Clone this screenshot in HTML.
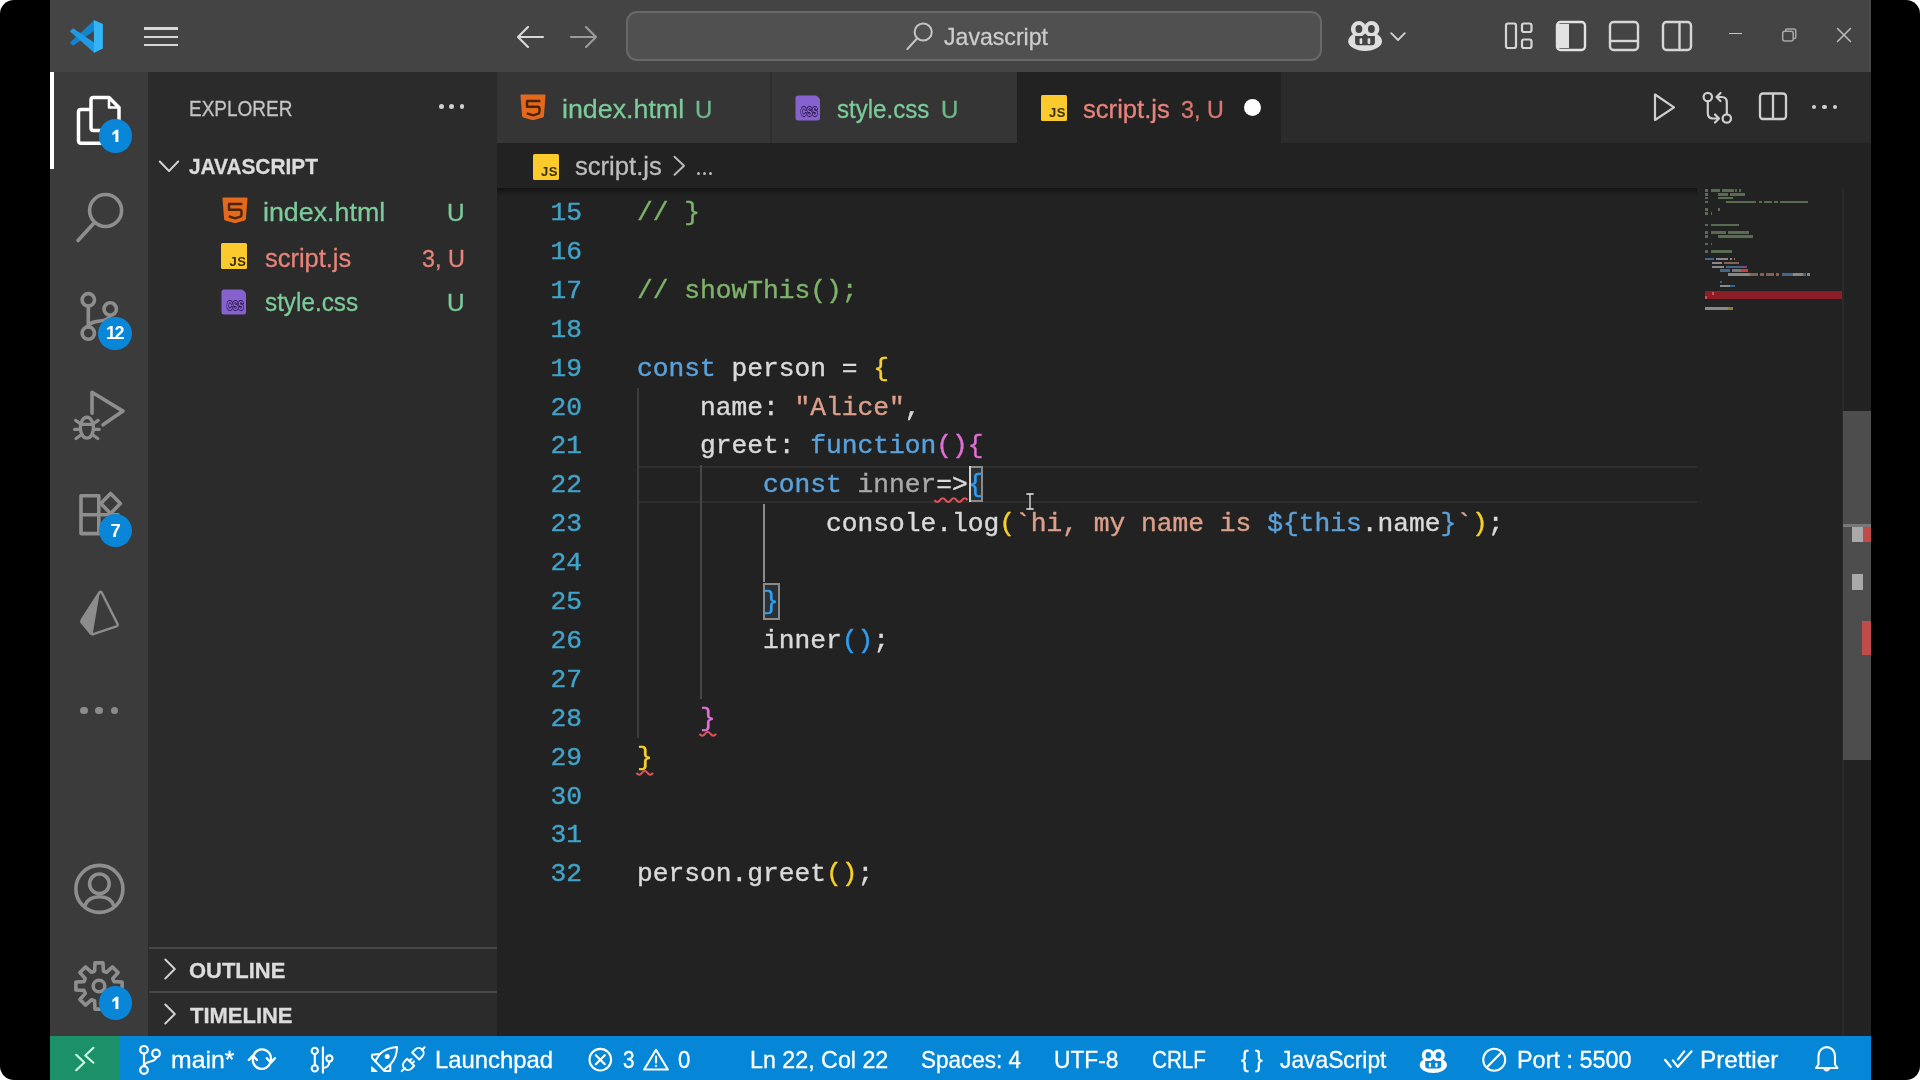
<!DOCTYPE html>
<html lang="en">
<head>
<meta charset="utf-8">
<title>script.js - Javascript - Visual Studio Code</title>
<style>
html,body{margin:0;padding:0;width:1920px;height:1080px;overflow:hidden;background:#ffffff;}
body{font-family:"Liberation Sans",sans-serif;}
#frame{position:absolute;left:0;top:0;width:1920px;height:1080px;background:#000;border-radius:14px;overflow:hidden;will-change:transform;}
.a{position:absolute;}
.t{position:absolute;white-space:pre;-webkit-text-stroke:0.3px;transform-origin:0 50%;font-family:"Liberation Sans",sans-serif;}
svg{position:absolute;overflow:visible;}
.ln{position:absolute;left:497px;width:85px;text-align:right;font-family:"Liberation Mono",monospace;font-size:26.26px;line-height:38.9px;height:38.9px;color:#41a3c9;white-space:pre;-webkit-text-stroke:0.4px;}
.cl{position:absolute;left:637px;font-family:"Liberation Mono",monospace;font-size:26.26px;line-height:38.9px;height:38.9px;color:#dadada;white-space:pre;-webkit-text-stroke:0.4px;}
.k{color:#5aa2dc}.s{color:#dca08a}.c{color:#7db36a}.y{color:#f7d02c}.p{color:#e070d6}.b{color:#2d9ff5}.w{color:#dadada}
.badge{position:absolute;width:33.400px;height:33.400px;border-radius:17px;background:#0a86d8;color:#fff;font-weight:700;font-size:18.500px;line-height:33.400px;text-align:center;font-family:"Liberation Sans",sans-serif;}
</style>
</head>
<body>
<div id="frame">
<!-- window background regions -->
<div class="a" style="left:50px;top:0;width:1821px;height:72px;background:#444444"></div>
<div class="a" style="left:1869px;top:0;width:2px;height:72px;background:#4a4a4a"></div>
<div class="a" style="left:50px;top:72px;width:98.400px;height:964px;background:#3b3b3b"></div>
<div class="a" style="left:148.400px;top:72px;width:348.600px;height:964px;background:#2b2b2b"></div>
<div class="a" style="left:497px;top:72px;width:1374px;height:964px;background:#222222"></div>
<!-- title bar -->
<svg style="left:68px;top:19px" width="38" height="36" viewBox="0 0 38 36">
 <path d="M1.800 23.800 L5 26.800 L26.500 11.600 V1 Z" fill="#1384cd"/>
 <path d="M1.800 12.200 L5 9.300 L26.500 23.800 V34 Z" fill="#1e9ae6"/>
 <path d="M25.900 0.900 L34.900 5 V29.600 L25.900 34 Z" fill="#34b4f5"/>
</svg>
<div class="a" style="left:143.700px;top:27.400px;width:34.400px;height:2.300px;background:#d6d6d6"></div>
<div class="a" style="left:143.700px;top:35.500px;width:34.400px;height:2.300px;background:#d6d6d6"></div>
<div class="a" style="left:143.700px;top:43.500px;width:34.400px;height:2.300px;background:#d6d6d6"></div>
<svg style="left:515px;top:24px" width="30" height="26" viewBox="0 0 30 26" fill="none" stroke="#d8d8d8" stroke-width="2.2" stroke-linecap="round" stroke-linejoin="round"><path d="M28 13 H3 M13 3 L3 13 L13 23"/></svg>
<svg style="left:569px;top:24px" width="30" height="26" viewBox="0 0 30 26" fill="none" stroke="#9a9a9a" stroke-width="2.2" stroke-linecap="round" stroke-linejoin="round"><path d="M2 13 H27 M17 3 L27 13 L17 23"/></svg>
<div class="a" style="left:625.500px;top:10.800px;width:692px;height:46.500px;border:2px solid #686868;border-radius:11px;background:#505050"></div>
<svg style="left:904px;top:20px" width="34" height="34" viewBox="0 0 34 34" fill="none" stroke="#c4c4c4" stroke-width="2" stroke-linecap="round"><circle cx="19.2" cy="12" r="8.6"/><path d="M13.2 18.3 L3.4 29"/></svg>
<!-- copilot -->
<svg style="left:1347px;top:20px" width="36" height="32" viewBox="0 0 36 32"><circle cx="11.700" cy="8.900" r="7.800" fill="#dedede"/><circle cx="24.600" cy="8.900" r="7.800" fill="#dedede"/><ellipse cx="18.100" cy="21.200" rx="16.900" ry="9.700" fill="#dedede"/><ellipse cx="11.900" cy="9.100" rx="3.400" ry="4" fill="#444444"/><ellipse cx="24.400" cy="9.100" rx="3.400" ry="4" fill="#444444"/><path d="M8.100 16 H15.200 L18.100 13.600 L21 16 H27.900 V22.300 Q27.900 25.300 24.900 25.300 H11.100 Q8.100 25.300 8.100 22.300 Z" fill="#444444"/><rect x="12.600" y="18.200" width="2.700" height="5.700" rx="1.200" fill="#dedede"/><rect x="20.600" y="18.200" width="2.700" height="5.700" rx="1.200" fill="#dedede"/></svg>
<svg style="left:1388.600px;top:31px" width="18" height="12" viewBox="0 0 18 12" fill="none" stroke="#d0d0d0" stroke-width="1.900" stroke-linecap="round" stroke-linejoin="round"><path d="M2.200 2.200 L9 9 L15.800 2.200"/></svg>
<!-- layout icons -->
<svg style="left:1504px;top:21px" width="30" height="30" viewBox="0 0 30 30" fill="none" stroke="#d6d6d6" stroke-width="2.200"><rect x="2" y="2.500" width="10" height="24.500" rx="2"/><rect x="18" y="2.500" width="9.500" height="8.500" rx="2"/><rect x="18" y="18.500" width="9.500" height="8.500" rx="2"/></svg>
<svg style="left:1555px;top:20px" width="32" height="32" viewBox="0 0 32 32" fill="none" stroke="#e2e2e2" stroke-width="2.400"><rect x="2" y="2" width="28" height="28" rx="3.500"/><path d="M2 4 H14 V28 H2 Z" fill="#e2e2e2" stroke="none"/></svg>
<svg style="left:1608px;top:20px" width="32" height="32" viewBox="0 0 32 32" fill="none" stroke="#d6d6d6" stroke-width="2.400"><rect x="2" y="2" width="28" height="28" rx="3.500"/><path d="M2 21 H30"/></svg>
<svg style="left:1661px;top:20px" width="32" height="32" viewBox="0 0 32 32" fill="none" stroke="#d6d6d6" stroke-width="2.400"><rect x="2" y="2" width="28" height="28" rx="3.500"/><path d="M18.500 2 V30"/></svg>
<!-- window controls -->
<div class="a" style="left:1729px;top:32.700px;width:13px;height:1.500px;background:#c6c6c6"></div>
<svg style="left:1781px;top:27px" width="18" height="16" viewBox="0 0 18 16" fill="none" stroke="#a8a8a8" stroke-width="1.500"><rect x="1.700" y="4.300" width="10.500" height="9.700" rx="2"/><path d="M4.500 4 V3.500 Q4.500 2 6 2 H13 Q14.800 2 14.800 3.800 V10 Q14.800 11.500 13.300 11.500 H12.500"/></svg>
<svg style="left:1836px;top:27px" width="16" height="16" viewBox="0 0 16 16" fill="none" stroke="#bdbdbd" stroke-width="1.500" stroke-linecap="round"><path d="M1.500 1.500 L14.500 14.500 M14.500 1.500 L1.500 14.500"/></svg>
<!-- activity bar -->
<div class="a" style="left:50px;top:72px;width:4px;height:97px;background:#ffffff"></div>
<!-- files -->
<svg style="left:70px;top:90px" width="60" height="60" viewBox="0 0 60 60" fill="none" stroke="#ffffff" stroke-width="3.500" stroke-linejoin="round" stroke-linecap="round">
 <path d="M20.500 19.500 H11 Q8.500 19.500 8.500 22 V50.500 Q8.500 53.200 11 53.200 H32"/>
 <path d="M23.500 7.500 H39 L49 17.500 V38 Q49 40.500 46.500 40.500 H23.500 Q21 40.500 21 38 V10 Q21 7.500 23.500 7.500 Z"/>
 <path d="M39 8 V17.500 H48.500" stroke-width="2.600"/>
</svg>
<div class="badge" style="left:99px;top:119.300px"><svg style="left:0;top:0" width="33.400" height="33.400" viewBox="-16.700 -16.700 33.400 33.400"><path d="M-3.300 -2.900 L0.300 -6 H2.700 V6.200 H-0.300 V-2.500 L-3.300 -0.400 Z" fill="#ffffff"/></svg></div>
<!-- search -->
<svg style="left:70px;top:186px" width="60" height="60" viewBox="0 0 60 60" fill="none" stroke="#8e8e8e" stroke-width="3.600" stroke-linecap="round">
 <circle cx="35.600" cy="24.500" r="16"/><path d="M24.500 36.500 L8 54.500"/>
</svg>
<!-- source control -->
<svg style="left:70px;top:286px" width="60" height="60" viewBox="0 0 60 60" fill="none" stroke="#8e8e8e" stroke-width="3.600" stroke-linecap="round">
 <circle cx="18.300" cy="13.800" r="6.200"/><circle cx="40.200" cy="23" r="6.200"/><circle cx="18.300" cy="47.100" r="6.200"/>
 <path d="M18.300 20 V41"/><path d="M40.200 29.200 C39.500 33.500 34 34.500 29.700 35 C24 35.800 19.500 36.500 18.300 40.500"/>
</svg>
<div class="badge" style="left:98.400px;top:316.500px;font-size:18px;letter-spacing:-1.300px;text-indent:-1px">12</div>
<!-- debug -->
<svg style="left:70px;top:384px" width="60" height="60" viewBox="0 0 60 60" fill="none" stroke="#8e8e8e" stroke-width="3.600" stroke-linecap="round" stroke-linejoin="round">
 <path d="M22 29.200 V8.300 L53 27.100 L33 40.800"/>
 <ellipse cx="16.900" cy="43.700" rx="6.600" ry="10.400" stroke-width="3.400"/>
 <path d="M5.600 36.400 L10 39.400 M28.200 36.400 L23.800 39.400 M4.600 45.400 H10 M29.200 45.400 H23.800 M6 54.500 L10.600 51.200 M27.800 54.500 L23.200 51.200 M10.800 40.300 H23" stroke-width="3.200"/>
</svg>
<!-- extensions -->
<svg style="left:70px;top:486px" width="60" height="60" viewBox="0 0 60 60" fill="none" stroke="#8e8e8e" stroke-width="3.600" stroke-linejoin="round">
 <path d="M11 9.800 H28.800 V47.600 H11 Z M11 28.700 H28.800 M28.800 28.700 H48 V47.600 H28.800"/>
 <path d="M40.600 7.500 L50.400 17.500 L40.600 27.500 L30.800 17.500 Z"/>
</svg>
<div class="badge" style="left:99px;top:513.700px">7</div>
<!-- prisma -->
<svg style="left:70px;top:582px" width="60" height="60" viewBox="0 0 60 60">
 <g transform="translate(29 31.600) scale(0.940) translate(-29 -31.200)">
 <path d="M29.600 8.500 L10.600 38 Q9.800 39.500 10.800 41 L20.500 52.500 Q21.500 53.500 23 53 L47.500 44.800 Q49.500 44 48.600 42 L32 9 Q31 7 29.600 8.500 Z" fill="none" stroke="#8c8c8c" stroke-width="2.600" stroke-linejoin="round"/>
 <path d="M29.600 8.500 L10.600 38 Q9.800 39.500 10.800 41 L20.500 52.500 Q21.300 53.300 22.300 53 L29.800 9 Z" fill="#8c8c8c"/>
 </g>
</svg>
<!-- more -->
<div class="a" style="left:80px;top:706.500px;width:7.500px;height:7.500px;border-radius:4px;background:#8c8c8c"></div>
<div class="a" style="left:95.400px;top:706.500px;width:7.500px;height:7.500px;border-radius:4px;background:#8c8c8c"></div>
<div class="a" style="left:110.700px;top:706.500px;width:7.500px;height:7.500px;border-radius:4px;background:#8c8c8c"></div>
<!-- account -->
<svg style="left:70px;top:859px" width="60" height="60" viewBox="0 0 60 60" fill="none" stroke="#8e8e8e" stroke-width="3.600">
 <circle cx="29.400" cy="29.900" r="23.500"/><circle cx="29.400" cy="24.800" r="9.800"/>
 <path d="M15 46.800 C17 40.500 22.500 37.800 29.400 37.800 C36.300 37.800 41.800 40.500 43.800 46.800"/>
</svg>
<!-- gear -->
<svg style="left:69px;top:956px" width="60" height="60" viewBox="0 0 60 60" fill="none" stroke="#8e8e8e" stroke-width="3.600" stroke-linejoin="round">
 <path d="M25.6 15.0 L26.0 6.9 L34.0 6.9 L34.4 15.0 L37.4 16.3 L43.5 10.9 L49.1 16.5 L43.7 22.6 L45.0 25.6 L53.1 26.0 L53.1 34.0 L45.0 34.4 L43.7 37.4 L49.1 43.5 L43.5 49.1 L37.4 43.7 L34.4 45.0 L34.0 53.1 L26.0 53.1 L25.6 45.0 L22.6 43.7 L16.5 49.1 L10.9 43.5 L16.3 37.4 L15.0 34.4 L6.9 34.0 L6.9 26.0 L15.0 25.6 L16.3 22.6 L10.9 16.5 L16.5 10.9 L22.6 16.3 Z"/>
 <circle cx="30" cy="30" r="5.800"/>
</svg>
<div class="badge" style="left:98.500px;top:986.300px"><svg style="left:0;top:0" width="33.400" height="33.400" viewBox="-16.700 -16.700 33.400 33.400"><path d="M-3.300 -2.900 L0.300 -6 H2.700 V6.200 H-0.300 V-2.500 L-3.300 -0.400 Z" fill="#ffffff"/></svg></div>
<!-- sidebar -->
<div class="a" style="left:439px;top:104.400px;width:4.600px;height:4.600px;border-radius:3px;background:#d0d0d0"></div>
<div class="a" style="left:449.300px;top:104.400px;width:4.600px;height:4.600px;border-radius:3px;background:#d0d0d0"></div>
<div class="a" style="left:459.700px;top:104.400px;width:4.600px;height:4.600px;border-radius:3px;background:#d0d0d0"></div>
<svg style="left:158px;top:159px" width="22" height="14" viewBox="0 0 22 14" fill="none" stroke="#d0d0d0" stroke-width="2" stroke-linecap="round" stroke-linejoin="round"><path d="M1.800 2.500 L11 12 L20.200 2.500"/></svg>
<!-- html icon -->
<svg style="left:221.600px;top:197.300px" width="26" height="27" viewBox="0 0 26 27"><path d="M1.500 0.400 H24.500 Q25.600 0.400 25.500 1.500 L23.900 22 Q23.800 23.200 22.700 23.600 L13.800 26 Q13 26.200 12.200 26 L3.300 23.600 Q2.200 23.200 2.100 22 L0.500 1.500 Q0.400 0.400 1.500 0.400 Z" fill="#e4691c"/><path d="M20.400 7 H7 V12.800 H17.500 Q19.500 12.800 19.500 14.800 V17.400 Q19.500 19.300 17.700 19.900 L13.800 21.100 Q13.100 21.300 12.400 21.100 L6.800 19.300" fill="none" stroke="#4a2308" stroke-width="2.400" stroke-linejoin="round"/></svg>
<!-- js icon -->
<div class="a" style="left:221.300px;top:243.200px;width:26px;height:26.300px;background:#fbcb2d;border-radius:1.500px"></div>
<div class="a" style="left:229.500px;top:255px;font-size:13px;line-height:13px;font-weight:700;color:#3a2e00;letter-spacing:0.500px">JS</div>
<!-- css icon -->
<svg style="left:221px;top:289px" width="27" height="26" viewBox="0 0 27 26"><path d="M3 0.500 H20.500 Q21.500 0.500 22.200 1.200 L24.300 3.300 Q25 4 25 5 V23 Q25 25.500 22.500 25.500 H3 Q0.500 25.500 0.500 23 V3 Q0.500 0.500 3 0.500 Z" fill="#8662cf"/><text x="14.300" y="21" font-family="Liberation Sans, sans-serif" font-weight="700" font-size="13.500" text-anchor="middle" fill="#8a68cc" stroke="#2c1a52" stroke-width="1.900" textLength="17" lengthAdjust="spacingAndGlyphs" paint-order="stroke">CSS</text></svg>
<!-- outline / timeline -->
<div class="a" style="left:149px;top:946.500px;width:348px;height:2px;background:#474747"></div>
<div class="a" style="left:149px;top:990.500px;width:348px;height:2px;background:#474747"></div>
<svg style="left:162px;top:957px" width="16" height="24" viewBox="0 0 16 24" fill="none" stroke="#d0d0d0" stroke-width="2" stroke-linecap="round" stroke-linejoin="round"><path d="M3.300 2.500 L12.800 12 L3.300 21.500"/></svg>
<svg style="left:162px;top:1002px" width="16" height="24" viewBox="0 0 16 24" fill="none" stroke="#d0d0d0" stroke-width="2" stroke-linecap="round" stroke-linejoin="round"><path d="M3.300 2.500 L12.800 12 L3.300 21.500"/></svg>
<!-- tabs -->
<div class="a" style="left:497px;top:72px;width:1374px;height:70.500px;background:#2b2b2b"></div>
<div class="a" style="left:497px;top:72px;width:273px;height:70.500px;background:#353535"></div>
<div class="a" style="left:770px;top:72px;width:1.500px;height:70.500px;background:#2e2e2e"></div>
<div class="a" style="left:771.500px;top:72px;width:245.500px;height:70.500px;background:#353535"></div>
<div class="a" style="left:1017px;top:72px;width:264px;height:71px;background:#222222"></div>
<!-- tab icons -->
<svg style="left:520.200px;top:94px" width="26" height="27" viewBox="0 0 26 27"><path d="M1.500 0.400 H24.500 Q25.600 0.400 25.500 1.500 L23.900 22 Q23.800 23.200 22.700 23.600 L13.800 26 Q13 26.200 12.200 26 L3.300 23.600 Q2.200 23.200 2.100 22 L0.500 1.500 Q0.400 0.400 1.500 0.400 Z" fill="#e4691c"/><path d="M20.400 7 H7 V12.800 H17.500 Q19.500 12.800 19.500 14.800 V17.400 Q19.500 19.300 17.700 19.900 L13.800 21.100 Q13.100 21.300 12.400 21.100 L6.800 19.300" fill="none" stroke="#4a2308" stroke-width="2.400" stroke-linejoin="round"/></svg>
<svg style="left:795.200px;top:94.600px" width="27" height="26" viewBox="0 0 27 26"><path d="M3 0.500 H20.500 Q21.500 0.500 22.200 1.200 L24.300 3.300 Q25 4 25 5 V23 Q25 25.500 22.500 25.500 H3 Q0.500 25.500 0.500 23 V3 Q0.500 0.500 3 0.500 Z" fill="#8662cf"/><text x="14.300" y="21" font-family="Liberation Sans, sans-serif" font-weight="700" font-size="13.500" text-anchor="middle" fill="#8a68cc" stroke="#2c1a52" stroke-width="1.900" textLength="17" lengthAdjust="spacingAndGlyphs" paint-order="stroke">CSS</text></svg>
<div class="a" style="left:1040.500px;top:94.800px;width:26.500px;height:26px;background:#fbcb2d;border-radius:1.500px"></div>
<div class="a" style="left:1049px;top:106px;font-size:13px;line-height:13px;font-weight:700;color:#3a2e00;letter-spacing:0.500px">JS</div>
<div class="a" style="left:1243.500px;top:98.700px;width:17px;height:17px;border-radius:9px;background:#ffffff"></div>
<!-- editor actions -->
<svg style="left:1650px;top:90px" width="30" height="34" viewBox="0 0 30 34" fill="none" stroke="#cfcfcf" stroke-width="2.200" stroke-linejoin="round"><path d="M5 4.500 V30 L24 17.300 Z"/></svg>
<svg style="left:1700px;top:89px" width="36" height="38" viewBox="0 0 36 38" fill="none" stroke="#cfcfcf" stroke-width="2.200" stroke-linecap="round" stroke-linejoin="round">
 <circle cx="7.800" cy="8" r="4.200"/><circle cx="26.800" cy="29.500" r="4.200"/>
 <path d="M7.800 12.500 V24 Q7.800 29.500 13 29.500 H18.500 M15 25.500 L19 29.500 L15 33.500"/>
 <path d="M26.800 25 V13.500 Q26.800 8 21.500 8 H17 M20.500 4 L16.500 8 L20.500 12"/>
</svg>
<svg style="left:1757px;top:90px" width="32" height="32" viewBox="0 0 32 32" fill="none" stroke="#cfcfcf" stroke-width="2.300"><rect x="3" y="3.500" width="26" height="25.500" rx="3"/><path d="M16 3.500 V29"/></svg>
<div class="a" style="left:1811.500px;top:104.500px;width:4.800px;height:4.800px;border-radius:3px;background:#d0d0d0"></div>
<div class="a" style="left:1822.100px;top:104.500px;width:4.800px;height:4.800px;border-radius:3px;background:#d0d0d0"></div>
<div class="a" style="left:1832.700px;top:104.500px;width:4.800px;height:4.800px;border-radius:3px;background:#d0d0d0"></div>
<!-- breadcrumbs -->
<div class="a" style="left:532.500px;top:153.500px;width:26px;height:26px;background:#fbcb2d;border-radius:1.500px"></div>
<div class="a" style="left:541px;top:165px;font-size:13px;line-height:13px;font-weight:700;color:#3a2e00;letter-spacing:0.500px">JS</div>
<svg style="left:671px;top:154px" width="16" height="24" viewBox="0 0 16 24" fill="none" stroke="#b8b8b8" stroke-width="2" stroke-linecap="round" stroke-linejoin="round"><path d="M3.500 2.800 L13 11.800 L3.500 20.800"/></svg>
<div class="a" style="left:696.500px;top:171.500px;width:3.600px;height:3.600px;border-radius:2px;background:#b8b8b8"></div>
<div class="a" style="left:702.700px;top:171.500px;width:3.600px;height:3.600px;border-radius:2px;background:#b8b8b8"></div>
<div class="a" style="left:708.900px;top:171.500px;width:3.600px;height:3.600px;border-radius:2px;background:#b8b8b8"></div>
<div class="a" style="left:497px;top:187.500px;width:1200px;height:8.500px;background:linear-gradient(#131313,rgba(34,34,34,0))"></div>
<!-- editor -->
<div class="a" style="left:638px;top:465.500px;width:1059px;height:2px;background:#2e2e2e"></div>
<div class="a" style="left:638px;top:500.800px;width:1059px;height:2px;background:#2e2e2e"></div>
<div class="a" style="left:637.3px;top:387.6px;width:1.500px;height:350.1px;background:#3c3c3c"></div>
<div class="a" style="left:700.3px;top:465.4px;width:1.500px;height:233.4px;background:#464646"></div>
<div class="a" style="left:763.3px;top:504.3px;width:1.500px;height:77.8px;background:#8c8c8c"></div>
<div class="a" style="left:969.2px;top:465.500px;width:13.6px;height:36px;border:2px solid #8a8a8a;box-sizing:border-box;background:#2a3034"></div>
<div class="a" style="left:763.0px;top:582.6px;width:16.6px;height:37.500px;border:2px solid #8a8a8a;box-sizing:border-box;background:#2a3034"></div>
<div class="ln" style="top:194.08px">15</div>
<div class="cl" style="top:194.08px"><span class="c">// }</span></div>
<div class="ln" style="top:232.98px">16</div>
<div class="ln" style="top:271.88px">17</div>
<div class="cl" style="top:271.88px"><span class="c">// showThis();</span></div>
<div class="ln" style="top:310.78px">18</div>
<div class="ln" style="top:349.68px">19</div>
<div class="cl" style="top:349.68px"><span class="k">const</span> person = <span class="y">{</span></div>
<div class="ln" style="top:388.58px">20</div>
<div class="cl" style="top:388.58px">    name: <span class="s">"Alice"</span>,</div>
<div class="ln" style="top:427.48px">21</div>
<div class="cl" style="top:427.48px">    greet: <span class="k">function</span><span class="p">(){</span></div>
<div class="ln" style="top:466.38px">22</div>
<div class="cl" style="top:466.38px">        <span class="k">const</span> <span style="color:#a9a9a9">inner</span>=&gt;<span class="b">{</span></div>
<div class="ln" style="top:505.28px">23</div>
<div class="cl" style="top:505.28px">            console.log<span class="y">(</span><span class="s">`hi, my name is </span><span class="k">${this</span>.name<span class="k">}</span><span class="s">`</span><span class="y">)</span>;</div>
<div class="ln" style="top:544.18px">24</div>
<div class="ln" style="top:583.08px">25</div>
<div class="cl" style="top:583.08px">        <span class="b">}</span></div>
<div class="ln" style="top:621.98px">26</div>
<div class="cl" style="top:621.98px">        inner<span class="b">()</span>;</div>
<div class="ln" style="top:660.88px">27</div>
<div class="ln" style="top:699.78px">28</div>
<div class="cl" style="top:699.78px">    <span class="p">}</span></div>
<div class="ln" style="top:738.68px">29</div>
<div class="cl" style="top:738.68px"><span class="y">}</span></div>
<div class="ln" style="top:777.58px">30</div>
<div class="ln" style="top:816.48px">31</div>
<div class="ln" style="top:855.38px">32</div>
<div class="cl" style="top:855.38px">person.greet<span class="y">()</span>;</div>
<div class="a" style="left:969.2px;top:466px;width:2.200px;height:36px;background:#d2d2d2"></div>
<svg style="left:0;top:0" width="1920" height="1080" viewBox="0 0 1920 1080" fill="none" stroke="#e2525a" stroke-width="2"><path d="M934.5 500.2 Q937.25 504.0 940.0 500.2 Q942.75 496.4 945.5 500.2 Q948.25 504.0 951.0 500.2 Q953.75 496.4 956.5 500.2 Q959.25 504.0 962.0 500.2 Q964.75 496.4 967.5 500.2"/></svg>
<svg style="left:0;top:0" width="1920" height="1080" viewBox="0 0 1920 1080" fill="none" stroke="#e2525a" stroke-width="2"><path d="M699.5 733.8 Q702.25 737.5999999999999 705.0 733.8 Q707.75 730.0 710.5 733.8 Q713.25 737.5999999999999 716.0 733.8"/></svg>
<svg style="left:0;top:0" width="1920" height="1080" viewBox="0 0 1920 1080" fill="none" stroke="#e2525a" stroke-width="2"><path d="M636.5 772.8 Q639.25 776.5999999999999 642.0 772.8 Q644.75 769.0 647.5 772.8 Q650.25 776.5999999999999 653.0 772.8"/></svg>
<svg style="left:1025px;top:492px" width="10" height="19" viewBox="0 0 10 19" fill="none" stroke-linecap="square"><path d="M2 2 H8 M5 2 V17 M2 17 H8" stroke="#222" stroke-width="3"/><path d="M2 2 H8 M5 2 V17 M2 17 H8" stroke="#e8e8e8" stroke-width="1.300"/></svg>
<!-- minimap -->
<div class="a" style="left:1704.7px;top:189.3px;width:3.8px;height:2.500px;background:#86a878;opacity:0.55"></div>
<div class="a" style="left:1710.5px;top:189.3px;width:9.6px;height:2.500px;background:#86a878;opacity:0.55"></div>
<div class="a" style="left:1722.0px;top:189.3px;width:11.5px;height:2.500px;background:#86a878;opacity:0.55"></div>
<div class="a" style="left:1735.4px;top:189.3px;width:1.9px;height:2.500px;background:#86a878;opacity:0.55"></div>
<div class="a" style="left:1739.3px;top:189.3px;width:1.9px;height:2.500px;background:#86a878;opacity:0.55"></div>
<div class="a" style="left:1704.7px;top:193.1px;width:3.8px;height:2.500px;background:#86a878;opacity:0.55"></div>
<div class="a" style="left:1718.1px;top:193.1px;width:9.6px;height:2.500px;background:#86a878;opacity:0.55"></div>
<div class="a" style="left:1729.7px;top:193.1px;width:15.4px;height:2.500px;background:#86a878;opacity:0.55"></div>
<div class="a" style="left:1704.7px;top:196.9px;width:3.8px;height:2.500px;background:#86a878;opacity:0.55"></div>
<div class="a" style="left:1718.1px;top:196.9px;width:15.4px;height:2.500px;background:#86a878;opacity:0.55"></div>
<div class="a" style="left:1704.7px;top:200.7px;width:3.8px;height:2.500px;background:#86a878;opacity:0.55"></div>
<div class="a" style="left:1725.8px;top:200.7px;width:30.7px;height:2.500px;background:#86a878;opacity:0.55"></div>
<div class="a" style="left:1758.5px;top:200.7px;width:3.8px;height:2.500px;background:#86a878;opacity:0.55"></div>
<div class="a" style="left:1764.2px;top:200.7px;width:7.7px;height:2.500px;background:#86a878;opacity:0.55"></div>
<div class="a" style="left:1773.8px;top:200.7px;width:3.8px;height:2.500px;background:#86a878;opacity:0.55"></div>
<div class="a" style="left:1779.6px;top:200.7px;width:28.8px;height:2.500px;background:#86a878;opacity:0.55"></div>
<div class="a" style="left:1704.7px;top:208.4px;width:3.8px;height:2.500px;background:#86a878;opacity:0.55"></div>
<div class="a" style="left:1718.1px;top:208.4px;width:1.9px;height:2.500px;background:#86a878;opacity:0.55"></div>
<div class="a" style="left:1704.7px;top:212.2px;width:3.8px;height:2.500px;background:#86a878;opacity:0.55"></div>
<div class="a" style="left:1710.5px;top:212.2px;width:1.9px;height:2.500px;background:#86a878;opacity:0.55"></div>
<div class="a" style="left:1704.7px;top:223.6px;width:3.8px;height:2.500px;background:#86a878;opacity:0.55"></div>
<div class="a" style="left:1710.5px;top:223.6px;width:28.8px;height:2.500px;background:#86a878;opacity:0.55"></div>
<div class="a" style="left:1704.7px;top:231.2px;width:3.8px;height:2.500px;background:#86a878;opacity:0.55"></div>
<div class="a" style="left:1710.5px;top:231.2px;width:15.4px;height:2.500px;background:#86a878;opacity:0.55"></div>
<div class="a" style="left:1727.7px;top:231.2px;width:21.1px;height:2.500px;background:#86a878;opacity:0.55"></div>
<div class="a" style="left:1704.7px;top:235.0px;width:3.8px;height:2.500px;background:#86a878;opacity:0.55"></div>
<div class="a" style="left:1718.1px;top:235.0px;width:34.6px;height:2.500px;background:#86a878;opacity:0.55"></div>
<div class="a" style="left:1704.7px;top:242.6px;width:3.8px;height:2.500px;background:#86a878;opacity:0.55"></div>
<div class="a" style="left:1710.5px;top:242.6px;width:1.9px;height:2.500px;background:#86a878;opacity:0.55"></div>
<div class="a" style="left:1704.7px;top:250.3px;width:3.8px;height:2.500px;background:#86a878;opacity:0.55"></div>
<div class="a" style="left:1710.5px;top:250.3px;width:21.1px;height:2.500px;background:#86a878;opacity:0.55"></div>
<div class="a" style="left:1704.500px;top:291.2px;width:138.500px;height:8.2px;background:#8a1d25"></div>
<div class="a" style="left:1712.4px;top:292.2px;width:1.9px;height:2.500px;background:#d05050;opacity:1"></div>
<div class="a" style="left:1704.7px;top:296.0px;width:1.9px;height:2.500px;background:#d05050;opacity:1"></div>
<div class="a" style="left:1704.7px;top:257.9px;width:9.6px;height:2.500px;background:#4f86b5;opacity:0.7"></div>
<div class="a" style="left:1716.2px;top:257.9px;width:11.5px;height:2.500px;background:#b5b5b5;opacity:0.7"></div>
<div class="a" style="left:1729.7px;top:257.9px;width:1.9px;height:2.500px;background:#b5b5b5;opacity:0.7"></div>
<div class="a" style="left:1733.5px;top:257.9px;width:1.9px;height:2.500px;background:#b9a23a;opacity:0.7"></div>
<div class="a" style="left:1712.4px;top:261.7px;width:9.6px;height:2.500px;background:#b5b5b5;opacity:0.7"></div>
<div class="a" style="left:1723.9px;top:261.7px;width:15.4px;height:2.500px;background:#a87c68;opacity:0.7"></div>
<div class="a" style="left:1712.4px;top:265.5px;width:11.5px;height:2.500px;background:#b5b5b5;opacity:0.7"></div>
<div class="a" style="left:1725.8px;top:265.5px;width:15.4px;height:2.500px;background:#4f86b5;opacity:0.7"></div>
<div class="a" style="left:1741.2px;top:265.5px;width:5.8px;height:2.500px;background:#a85ca3;opacity:0.7"></div>
<div class="a" style="left:1720.1px;top:269.3px;width:9.6px;height:2.500px;background:#4f86b5;opacity:0.7"></div>
<div class="a" style="left:1731.6px;top:269.3px;width:9.6px;height:2.500px;background:#9a9a9a;opacity:0.7"></div>
<div class="a" style="left:1727.7px;top:273.1px;width:21.1px;height:2.500px;background:#b5b5b5;opacity:0.7"></div>
<div class="a" style="left:1748.9px;top:273.1px;width:1.9px;height:2.500px;background:#b9a23a;opacity:0.7"></div>
<div class="a" style="left:1750.8px;top:273.1px;width:7.7px;height:2.500px;background:#a87c68;opacity:0.7"></div>
<div class="a" style="left:1760.4px;top:273.1px;width:3.8px;height:2.500px;background:#a87c68;opacity:0.7"></div>
<div class="a" style="left:1766.1px;top:273.1px;width:7.7px;height:2.500px;background:#a87c68;opacity:0.7"></div>
<div class="a" style="left:1775.7px;top:273.1px;width:3.8px;height:2.500px;background:#a87c68;opacity:0.7"></div>
<div class="a" style="left:1781.5px;top:273.1px;width:11.5px;height:2.500px;background:#4f86b5;opacity:0.7"></div>
<div class="a" style="left:1793.0px;top:273.1px;width:9.6px;height:2.500px;background:#b5b5b5;opacity:0.7"></div>
<div class="a" style="left:1802.6px;top:273.1px;width:3.8px;height:2.500px;background:#4f86b5;opacity:0.7"></div>
<div class="a" style="left:1806.5px;top:273.1px;width:3.8px;height:2.500px;background:#b5b5b5;opacity:0.7"></div>
<div class="a" style="left:1720.1px;top:280.7px;width:1.9px;height:2.500px;background:#2d86c8;opacity:0.7"></div>
<div class="a" style="left:1720.1px;top:284.6px;width:9.6px;height:2.500px;background:#b5b5b5;opacity:0.7"></div>
<div class="a" style="left:1729.7px;top:284.6px;width:5.8px;height:2.500px;background:#2d86c8;opacity:0.7"></div>
<div class="a" style="left:1704.7px;top:307.4px;width:23.0px;height:2.500px;background:#b5b5b5;opacity:0.7"></div>
<div class="a" style="left:1727.7px;top:307.4px;width:5.8px;height:2.500px;background:#b9a23a;opacity:0.7"></div>
<div class="a" style="left:1741.2px;top:268.5px;width:6.7px;height:3.800px;background:#d43b3b"></div>
<div class="a" style="left:1842px;top:188px;width:1.500px;height:848px;background:#2a2a2a"></div>
<div class="a" style="left:1843px;top:411px;width:28px;height:348.500px;background:#4d4d4d"></div>
<div class="a" style="left:1843px;top:524px;width:28px;height:2.500px;background:#787878"></div>
<div class="a" style="left:1852.300px;top:527px;width:10.700px;height:14.500px;background:#a9a9a9"></div>
<div class="a" style="left:1863px;top:527px;width:8px;height:14.500px;background:#c14a4a"></div>
<div class="a" style="left:1852.300px;top:573.500px;width:10.700px;height:16px;background:#a9a9a9"></div>
<div class="a" style="left:1862px;top:621px;width:9px;height:33.500px;background:#c14a4a"></div>
<!-- status bar -->
<div class="a" style="left:50px;top:1036px;width:1821px;height:44px;background:#0686d6"></div>
<div class="a" style="left:50px;top:1036px;width:69.500px;height:44px;background:#1c9169"></div>
<!-- remote icon -->
<svg style="left:73px;top:1045px" width="24" height="28" viewBox="0 0 24 28" fill="none" stroke="#ccf5e2" stroke-width="2.200" stroke-linecap="round" stroke-linejoin="round"><path d="M3.200 9.800 L11.300 17.500 L3.200 25.200"/><path d="M20.400 2.800 L12.300 10.500 L20.400 17.700"/></svg>
<!-- branch -->
<svg style="left:137px;top:1044px" width="26" height="32" viewBox="0 0 26 32" fill="none" stroke="#ffffff" stroke-width="2.200" stroke-linecap="round"><circle cx="7" cy="5.800" r="3.800"/><circle cx="7" cy="26" r="3.800"/><circle cx="19" cy="9.500" r="3.800"/><path d="M7 9.800 V22"/><path d="M19 13.500 C19 19 8 16 7 22"/></svg>
<!-- sync -->
<svg style="left:247px;top:1046px" width="32" height="28" viewBox="0 0 32 28" fill="none" stroke="#ffffff" stroke-width="2.300" stroke-linecap="round" stroke-linejoin="round"><path d="M6.440 9.600 A9 9 0 0 1 23.900 13.800"/><path d="M19.800 12.200 L23.900 16.600 L28 12.200"/><path d="M23.360 16.600 A9 9 0 0 1 5.900 12.400"/><path d="M1.800 14 L5.900 9.600 L10 14"/></svg>
<!-- graph (gitlens) -->
<svg style="left:308px;top:1044px" width="28" height="32" viewBox="0 0 28 32" fill="none" stroke="#ffffff" stroke-width="2.100" stroke-linecap="round"><circle cx="6.800" cy="6.900" r="3.100"/><circle cx="6.800" cy="24.400" r="3.100"/><circle cx="21.400" cy="14.500" r="3.100"/><path d="M6.800 10 V21.300 M14.900 3.300 V28.800"/><path d="M21.400 17.600 C21.400 22 18 24 14.900 24"/></svg>
<!-- rocket -->
<svg style="left:370px;top:1045px" width="30" height="28" viewBox="0 0 30 28" fill="none" stroke="#ffffff" stroke-width="2" stroke-linecap="round" stroke-linejoin="round"><path d="M27 2.100 C19.500 2.600 13.500 5.500 9.800 9 L5.200 16.200 L13.600 25 L20.300 19.500 C24.500 15.500 27 9.500 27 2.100 Z"/><path d="M9.800 9 L2 9.800 V12.800 L5.200 16.200"/><path d="M20.300 19.500 V26 H14.200 L13.600 25"/><path d="M1.700 22 V26.400 H6.800 Z" fill="#ffffff" stroke-width="1.200"/><circle cx="17.200" cy="11.500" r="2.500" fill="#ffffff" stroke="none"/></svg>
<!-- plug -->
<svg style="left:400px;top:1045px" width="28" height="28" viewBox="0 0 28 28" fill="none" stroke="#ffffff" stroke-width="2" stroke-linecap="round" stroke-linejoin="round"><path d="M12.200 7.500 L19.200 14.500 L22.200 11.500 A4.950 4.950 0 0 0 15.200 4.500 Z"/><path d="M21.800 5 L24.600 2.200"/><path d="M7.200 13.800 L14.200 20.800 L11.400 23.600 A4.950 4.950 0 0 1 4.400 16.600 Z"/><path d="M4.900 23 L1.700 26.100"/><path d="M9.600 15.900 L11.500 14 M12.100 18.400 L14 16.500"/></svg>
<!-- error -->
<svg style="left:586px;top:1047px" width="28" height="26" viewBox="0 0 28 26" fill="none" stroke="#ffffff" stroke-width="2.100" stroke-linecap="round"><circle cx="14.300" cy="12.700" r="10.800"/><path d="M9.800 8.200 L18.800 17.200 M18.800 8.200 L9.800 17.200"/></svg>
<!-- warning -->
<svg style="left:642px;top:1047px" width="28" height="26" viewBox="0 0 28 26" fill="none" stroke="#ffffff" stroke-width="2.100" stroke-linecap="round" stroke-linejoin="round"><path d="M14 2.800 L25.800 22.500 H2.200 Z"/><path d="M14 9.500 V15.500 M14 18.800 V19"/></svg>
<!-- copilot small -->
<svg style="left:1417.800px;top:1047.800px" width="30.500" height="25" viewBox="0 0 36 31"><circle cx="11.700" cy="8.900" r="7.800" fill="#ffffff"/><circle cx="24.600" cy="8.900" r="7.800" fill="#ffffff"/><ellipse cx="18.100" cy="21.200" rx="16.900" ry="9.700" fill="#ffffff"/><ellipse cx="11.900" cy="9.100" rx="3.400" ry="4" fill="#0686d6"/><ellipse cx="24.400" cy="9.100" rx="3.400" ry="4" fill="#0686d6"/><path d="M8.100 16 H15.200 L18.100 13.600 L21 16 H27.900 V22.300 Q27.900 25.300 24.900 25.300 H11.100 Q8.100 25.300 8.100 22.300 Z" fill="#0686d6"/><rect x="12.600" y="18.200" width="2.700" height="5.700" rx="1.200" fill="#ffffff"/><rect x="20.600" y="18.200" width="2.700" height="5.700" rx="1.200" fill="#ffffff"/></svg>
<!-- circle slash -->
<svg style="left:1480px;top:1047px" width="28" height="26" viewBox="0 0 28 26" fill="none" stroke="#ffffff" stroke-width="2.100" stroke-linecap="round"><circle cx="14.200" cy="12.800" r="11"/><path d="M6.700 20.500 L21.800 5"/></svg>
<!-- double check -->
<svg style="left:1663px;top:1048px" width="32" height="22" viewBox="0 0 32 22" fill="none" stroke="#ffffff" stroke-width="2.200" stroke-linecap="round" stroke-linejoin="round"><path d="M2 11.800 L7.700 18.800"/><path d="M9.800 12.300 L14.800 18.800 L28.600 3.300"/><path d="M15 11.400 L21.200 3.400"/></svg>
<!-- bell -->
<svg style="left:1813px;top:1045px" width="28" height="28" viewBox="0 0 28 28" fill="none" stroke="#ffffff" stroke-width="2.100" stroke-linecap="round" stroke-linejoin="round"><path d="M5.500 19.500 V11.500 C5.500 -1 22 -1 22 11.500 V19.500 L24.500 23 H3 Z"/><path d="M11.500 24 Q13.800 27 16 24"/></svg>

<!-- labels -->
<span class="t" style="left:944.40px;top:25.28px;font-size:24px;line-height:24px;font-weight:400;color:#cccccc;transform:scaleX(0.9629)">Javascript</span>
<span class="t" style="left:189.24px;top:98.08px;font-size:22px;line-height:22px;font-weight:400;color:#c4c4c4;transform:scaleX(0.8624)">EXPLORER</span>
<span class="t" style="left:189.20px;top:156.38px;font-size:22px;line-height:22px;font-weight:700;color:#dcdcdc;transform:scaleX(0.9469)">JAVASCRIPT</span>
<span class="t" style="left:263.49px;top:199.37px;font-size:26.5px;line-height:26.5px;font-weight:400;color:#7ccb9a;transform:scaleX(1.0119)">index.html</span>
<span class="t" style="left:446.99px;top:201.18px;font-size:24px;line-height:24px;font-weight:400;color:#7ccb9a;transform:scaleX(1.0133)">U</span>
<span class="t" style="left:264.50px;top:244.77px;font-size:26.5px;line-height:26.5px;font-weight:400;color:#e8837a;transform:scaleX(0.9602)">script.js</span>
<span class="t" style="left:421.60px;top:246.68px;font-size:24px;line-height:24px;font-weight:400;color:#e8837a;transform:scaleX(0.9746)">3, U</span>
<span class="t" style="left:264.50px;top:289.27px;font-size:26.5px;line-height:26.5px;font-weight:400;color:#7ccb9a;transform:scaleX(0.9156)">style.css</span>
<span class="t" style="left:446.99px;top:291.18px;font-size:24px;line-height:24px;font-weight:400;color:#7ccb9a;transform:scaleX(1.0133)">U</span>
<span class="t" style="left:189.00px;top:959.78px;font-size:22px;line-height:22px;font-weight:700;color:#dcdcdc;transform:scaleX(0.9971)">OUTLINE</span>
<span class="t" style="left:189.75px;top:1004.58px;font-size:22px;line-height:22px;font-weight:700;color:#dcdcdc;transform:scaleX(0.9986)">TIMELINE</span>
<span class="t" style="left:562.09px;top:96.07px;font-size:26.5px;line-height:26.5px;font-weight:400;color:#7ccb9a;transform:scaleX(1.0110)">index.html</span>
<span class="t" style="left:694.76px;top:98.78px;font-size:23px;line-height:23px;font-weight:400;color:#6fb88a;transform:scaleX(1.0429)">U</span>
<span class="t" style="left:837.40px;top:96.07px;font-size:26.5px;line-height:26.5px;font-weight:400;color:#7ccb9a;transform:scaleX(0.9087)">style.css</span>
<span class="t" style="left:940.96px;top:98.78px;font-size:23px;line-height:23px;font-weight:400;color:#6fb88a;transform:scaleX(1.0429)">U</span>
<span class="t" style="left:1083.40px;top:96.07px;font-size:26.5px;line-height:26.5px;font-weight:400;color:#e8837a;transform:scaleX(0.9669)">script.js</span>
<span class="t" style="left:1180.90px;top:98.78px;font-size:23px;line-height:23px;font-weight:400;color:#d8786f;transform:scaleX(1.0130)">3, U</span>
<span class="t" style="left:575.00px;top:152.87px;font-size:26.5px;line-height:26.5px;font-weight:400;color:#bdbdbd;transform:scaleX(0.9658)">script.js</span>
<span class="t" style="left:171.47px;top:1048.43px;font-size:24px;line-height:24px;font-weight:400;color:#ffffff;transform:scaleX(1.0330)">main*</span>
<span class="t" style="left:435.26px;top:1048.43px;font-size:24px;line-height:24px;font-weight:400;color:#ffffff;transform:scaleX(0.9941)">Launchpad</span>
<span class="t" style="left:622.50px;top:1048.43px;font-size:24px;line-height:24px;font-weight:400;color:#ffffff;transform:scaleX(0.8654)">3</span>
<span class="t" style="left:677.50px;top:1048.43px;font-size:24px;line-height:24px;font-weight:400;color:#ffffff;transform:scaleX(0.9231)">0</span>
<span class="t" style="left:749.53px;top:1048.43px;font-size:24px;line-height:24px;font-weight:400;color:#ffffff;transform:scaleX(0.9687)">Ln 22, Col 22</span>
<span class="t" style="left:921.06px;top:1048.43px;font-size:24px;line-height:24px;font-weight:400;color:#ffffff;transform:scaleX(0.9370)">Spaces: 4</span>
<span class="t" style="left:1054.05px;top:1048.43px;font-size:24px;line-height:24px;font-weight:400;color:#ffffff;transform:scaleX(0.9491)">UTF-8</span>
<span class="t" style="left:1151.64px;top:1048.43px;font-size:24px;line-height:24px;font-weight:400;color:#ffffff;transform:scaleX(0.8605)">CRLF</span>
<span class="t" style="left:1241.25px;top:1047.18px;font-size:24px;line-height:24px;font-weight:400;color:#ffffff;transform:scaleX(0.9588)">{ }</span>
<span class="t" style="left:1279.50px;top:1048.43px;font-size:24px;line-height:24px;font-weight:400;color:#ffffff;transform:scaleX(0.9499)">JavaScript</span>
<span class="t" style="left:1516.52px;top:1048.43px;font-size:24px;line-height:24px;font-weight:400;color:#ffffff;transform:scaleX(0.9758)">Port : 5500</span>
<span class="t" style="left:1700.24px;top:1048.18px;font-size:24px;line-height:24px;font-weight:400;color:#ffffff;transform:scaleX(1.0129)">Prettier</span>
</div>
</body>
</html>
